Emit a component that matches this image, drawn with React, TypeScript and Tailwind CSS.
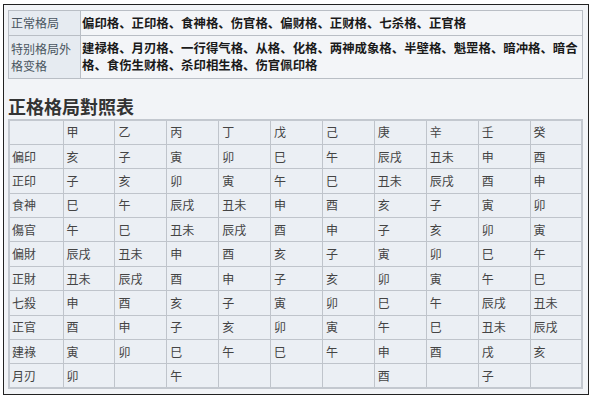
const header = ["甲", "乙", "丙", "丁", "戊", "己", "庚", "辛", "壬", "癸"];

const rows: [string, string[]][] = [
  ["偏印", ["亥", "子", "寅", "卯", "巳", "午", "辰戌", "丑未", "申", "酉"]],
  ["正印", ["子", "亥", "卯", "寅", "午", "巳", "丑未", "辰戌", "酉", "申"]],
  ["食神", ["巳", "午", "辰戌", "丑未", "申", "酉", "亥", "子", "寅", "卯"]],
  ["傷官", ["午", "巳", "丑未", "辰戌", "酉", "申", "子", "亥", "卯", "寅"]],
  ["偏財", ["辰戌", "丑未", "申", "酉", "亥", "子", "寅", "卯", "巳", "午"]],
  ["正財", ["丑未", "辰戌", "酉", "申", "子", "亥", "卯", "寅", "午", "巳"]],
  ["七殺", ["申", "酉", "亥", "子", "寅", "卯", "巳", "午", "辰戌", "丑未"]],
  ["正官", ["酉", "申", "子", "亥", "卯", "寅", "午", "巳", "丑未", "辰戌"]],
  ["建祿", ["寅", "卯", "巳", "午", "巳", "午", "申", "酉", "戌", "亥"]],
  ["月刃", ["卯", "", "午", "", "", "", "酉", "", "子", ""]],
];

export default function App() {
  return (
    <div className="w-[600px] h-[400px] bg-white pt-[4px] pl-[3px] font-['Noto_Sans_CJK_SC','Liberation_Sans',sans-serif]">
      <div className="w-[586px] h-[391px] border border-[#222] bg-[#f2f4f7] pl-[4px] pt-[5px]">
        {/* 格局分类 */}
        <table className="w-[575px] border-collapse border border-[#b9bec5] table-fixed">
          <colgroup>
            <col className="w-[72px]" />
            <col />
          </colgroup>
          <tbody>
            <tr className="h-[25px]">
              <td className="border border-[#b9bec5] bg-[#e6ebf1] px-[2px] text-[12px] text-[#4a5560] align-middle">
                正常格局
              </td>
              <td className="border border-[#b9bec5] bg-[#f3f5f8] px-[1px] text-[12.4px] font-bold text-[#1a1a1a] align-middle">
                偏印格、正印格、食神格、伤官格、偏财格、正财格、七杀格、正官格
              </td>
            </tr>
            <tr className="h-[43px]">
              <td className="border border-[#b9bec5] bg-[#e6ebf1] px-[2px] text-[12px] leading-[17px] text-[#4a5560] align-middle">
                特别格局外
                <br />
                格变格
              </td>
              <td className="border border-[#b9bec5] bg-[#f3f5f8] px-[1px] text-[12.4px] leading-[17px] font-bold text-[#1a1a1a] align-middle whitespace-nowrap">
                建禄格、月刃格、一行得气格、从格、化格、两神成象格、半壁格、魁罡格、暗冲格、暗合
                <br />
                格、食伤生财格、杀印相生格、伤官佩印格
              </td>
            </tr>
          </tbody>
        </table>

        <h1 className="mt-[15px] h-[24px] leading-[24px] text-[18px] font-bold text-[#333]">
          正格格局對照表
        </h1>

        {/* 对照表 */}
        <table className="mt-[1px] w-[575px] border-collapse border-2 border-[#c3c8cf] table-fixed text-[12px] text-[#444]">
          <colgroup>
            <col className="w-[54px]" />
          </colgroup>
          <tbody>
            <tr className="h-[24.4px]">
              <td className="border border-[#bfc4cb] bg-[#ebeff4] px-[3px]"></td>
              {header.map((h) => (
                <td key={h} className="border border-[#bfc4cb] bg-[#ebeff4] px-[3px]">
                  {h}
                </td>
              ))}
            </tr>
            {rows.map(([label, cells]) => (
              <tr key={label} className="h-[24.4px]">
                <td className="border border-[#bfc4cb] bg-[#ebeff4] px-[2px]">{label}</td>
                {cells.map((c, i) => (
                  <td key={i} className="border border-[#bfc4cb] bg-[#ebeff4] px-[3px]">
                    {c}
                  </td>
                ))}
              </tr>
            ))}
          </tbody>
        </table>
      </div>
    </div>
  );
}
